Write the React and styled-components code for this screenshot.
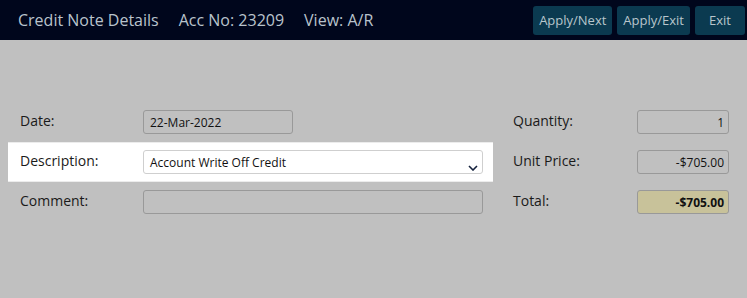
import styled, { createGlobalStyle } from "styled-components";

const GlobalStyle = createGlobalStyle`
	html, body {
		margin: 0;
		padding: 0;
		background: #c0c0c0;
		font-family: "Open Sans", "Liberation Sans", sans-serif;
	}
`;

export default function App() {
	return (
		<>
			<GlobalStyle />
			<Page>
				<Header>
					<Titles>
						<Title>Credit Note Details</Title>
						<Title>Acc No: 23209</Title>
						<Title>View: A/R</Title>
					</Titles>
					<Actions>
						<HeaderButton>Apply/Next</HeaderButton>
						<HeaderButton>Apply/Exit</HeaderButton>
						<HeaderButton>Exit</HeaderButton>
					</Actions>
				</Header>
				<Form>
					<LeftColumn>
						<LeftRow>
							<Label>Date:</Label>
							<Field $width="150px">22-Mar-2022</Field>
						</LeftRow>
						<LeftRow $active>
							<Label>Description:</Label>
							<Select>
								<span>Account Write Off Credit</span>
								<Chevron viewBox="0 0 10 6">
									<path d="M1 1 L5 5 L9 1" />
								</Chevron>
							</Select>
						</LeftRow>
						<LeftRow>
							<Label>Comment:</Label>
							<Field />
						</LeftRow>
					</LeftColumn>
					<RightColumn>
						<RightRow>
							<Label $width="124px">Quantity:</Label>
							<Amount>1</Amount>
						</RightRow>
						<RightRow>
							<Label $width="124px">Unit Price:</Label>
							<Amount>-$705.00</Amount>
						</RightRow>
						<RightRow>
							<Label $width="124px">Total:</Label>
							<Amount $total>-$705.00</Amount>
						</RightRow>
					</RightColumn>
				</Form>
			</Page>
		</>
	);
}

const Page = styled.div`
	width: 747px;
	height: 298px;
	background: #c0c0c0;
`;

const Header = styled.header`
	height: 40px;
	background: #00061c;
	display: flex;
	align-items: center;
	justify-content: space-between;
	padding: 0 2px 0 18px;
`;

const Titles = styled.div`
	display: flex;
	gap: 20px;
`;

const Title = styled.span`
	color: #b9c3cc;
	font-size: 16px;
	line-height: 20px;
`;

const Actions = styled.div`
	display: flex;
	gap: 5px;
`;

const HeaderButton = styled.button`
	height: 29px;
	padding: 0 6px;
	min-width: 50px;
	border: none;
	border-radius: 3px;
	background: #0b3a50;
	color: #b9c6cc;
	font-family: inherit;
	font-size: 13px;
	cursor: pointer;
`;

const Form = styled.div`
	display: flex;
	gap: 12px;
	padding: 62px 0 0 8px;
`;

const LeftColumn = styled.div`
	width: 485px;
	display: flex;
	flex-direction: column;
`;

const LeftRow = styled.div`
	height: 40px;
	box-sizing: border-box;
	display: flex;
	align-items: center;
	padding: 0 10px 0 12px;
	background: ${({ $active }) => ($active ? "#ffffff" : "transparent")};
	border: 1px solid ${({ $active }) => ($active ? "#ececec" : "transparent")};
	border-width: 1px 0 1px 0;
`;

const RightColumn = styled.div`
	display: flex;
	flex-direction: column;
`;

const RightRow = styled.div`
	height: 40px;
	display: flex;
	align-items: center;
	padding-left: 8px;
`;

const Label = styled.span`
	width: ${({ $width }) => $width || "123px"};
	flex-shrink: 0;
	color: #1a1a1a;
	font-size: 14px;
	margin-top: -3px;
`;

const Field = styled.div`
	box-sizing: border-box;
	height: 24px;
	width: ${({ $width }) => $width || "auto"};
	flex: ${({ $width }) => ($width ? "none" : "1")};
	border: 1px solid #999;
	border-radius: 3px;
	padding: 0 6px;
	display: flex;
	align-items: center;
	font-size: 12px;
	color: #111;
	background: transparent;
`;

const Select = styled(Field)`
	border-color: #cfcfcf;
	background: #fff;
	justify-content: space-between;
	padding-right: 4px;
`;

const Chevron = styled.svg`
	width: 10px;
	height: 6px;
	margin-top: 11px;
	fill: none;
	stroke: #14213d;
	stroke-width: 1.6;
`;

const Amount = styled(Field)`
	width: 92px;
	flex: none;
	justify-content: flex-end;
	padding: 0 4px;
	font-weight: ${({ $total }) => ($total ? 700 : 400)};
	background: ${({ $total }) => ($total ? "#c8c29a" : "transparent")};
`;
